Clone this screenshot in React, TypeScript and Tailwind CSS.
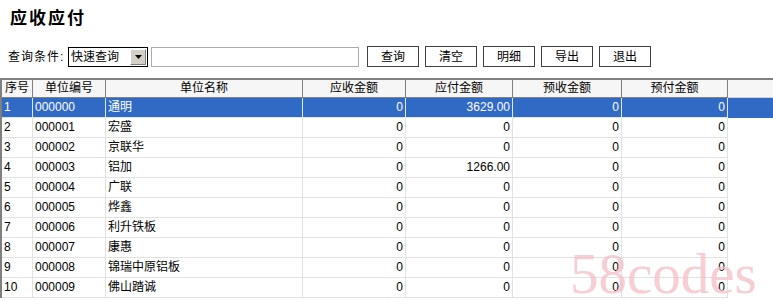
import React from 'react'

const font = { fontFamily: '"Liberation Sans", "Noto Sans CJK SC", sans-serif' }

const cols = [
  { title: '序号', w: 'w-[31px]', num: false },
  { title: '单位编号', w: 'w-[73px]', num: false },
  { title: '单位名称', w: 'w-[197px]', num: false },
  { title: '应收金额', w: 'w-[103px]', num: true },
  { title: '应付金额', w: 'w-[107px]', num: true },
  { title: '预收金额', w: 'w-[109px]', num: true },
  { title: '预付金额', w: 'w-[106px]', num: true },
]

const rows = [
  ['1', '000000', '通明', '0', '3629.00', '0', '0'],
  ['2', '000001', '宏盛', '0', '0', '0', '0'],
  ['3', '000002', '京联华', '0', '0', '0', '0'],
  ['4', '000003', '铝加', '0', '1266.00', '0', '0'],
  ['5', '000004', '广联', '0', '0', '0', '0'],
  ['6', '000005', '烨鑫', '0', '0', '0', '0'],
  ['7', '000006', '利升铁板', '0', '0', '0', '0'],
  ['8', '000007', '康惠', '0', '0', '0', '0'],
  ['9', '000008', '锦瑞中原铝板', '0', '0', '0', '0'],
  ['10', '000009', '佛山踏诚', '0', '0', '0', '0'],
]

const buttons = ['查询', '清空', '明细', '导出', '退出']

export default function App() {
  return (
    <div className="relative h-[301px] w-[773px] overflow-hidden bg-white text-[12px] text-black" style={font}>
      <div className="pl-[10px] pt-[8px] text-[17px] font-bold leading-[22px] tracking-[2px]">应收应付</div>

      {/* query bar */}
      <div className="mt-[16px] flex h-[21px] items-center pl-[8px]">
        <span className="mr-[2px] w-[58px] tracking-[1px]">查询条件:</span>
        <div className="flex h-[20px] w-[80px] items-center border border-black bg-white pl-[2px]">
          <span className="flex-1 leading-[18px]">快速查询</span>
          <div className="mr-[1px] flex h-[16px] w-[16px] items-center justify-center border border-t-white border-l-white border-r-[#808080] border-b-[#808080] bg-[#d4d0c8]">
            <svg width="7" height="4" viewBox="0 0 7 4"><path d="M0 0h7L3.5 4z" fill="#000" /></svg>
          </div>
        </div>
        <div className="ml-[3px] h-[20px] w-[208px] border border-[#a5acb5] bg-white" />
        <div className="ml-[8px] flex gap-[6px]">
          {buttons.map(b => (
            <div key={b} className="flex h-[21px] w-[52px] items-center justify-center border border-[#404040] bg-white">
              {b}
            </div>
          ))}
        </div>
      </div>

      {/* grid */}
      <div className="mt-[11px] border-l-2 border-t-2 border-[#808080]">
        <div className="flex h-[18px] bg-[#f6f6f6]">
          {cols.map(c => (
            <div key={c.title} className={`${c.w} flex shrink-0 items-center justify-center border-b border-r border-[#808080] leading-[17px]`}>
              {c.title}
            </div>
          ))}
          <div className="flex-1 border-b border-[#d0d0d0]" />
        </div>
        {rows.map((r, i) => {
          const sel = i === 0
          return (
            <div key={r[0]} className={sel ? 'flex h-[20px] bg-[#316ac5] text-white' : 'flex h-[20px]'}>
              {cols.map((c, j) => (
                <div
                  key={c.title}
                  className={`${c.w} flex shrink-0 items-center border-b border-r px-[2px] leading-[19px] ${c.num ? 'justify-end' : ''} ${sel ? 'border-[#dfe8f6]' : 'border-[#e2e2e2]'}`}
                >
                  {r[j]}
                </div>
              ))}
              <div className="flex-1" />
            </div>
          )
        })}
      </div>

      {/* watermark */}
      <div
        className="pointer-events-none absolute left-[570px] top-[245px] text-[57px] leading-[57px] text-[#f4c2ca] opacity-80"
        style={{ fontFamily: '"Liberation Serif", serif' }}
      >
        58codes
      </div>
    </div>
  )
}
